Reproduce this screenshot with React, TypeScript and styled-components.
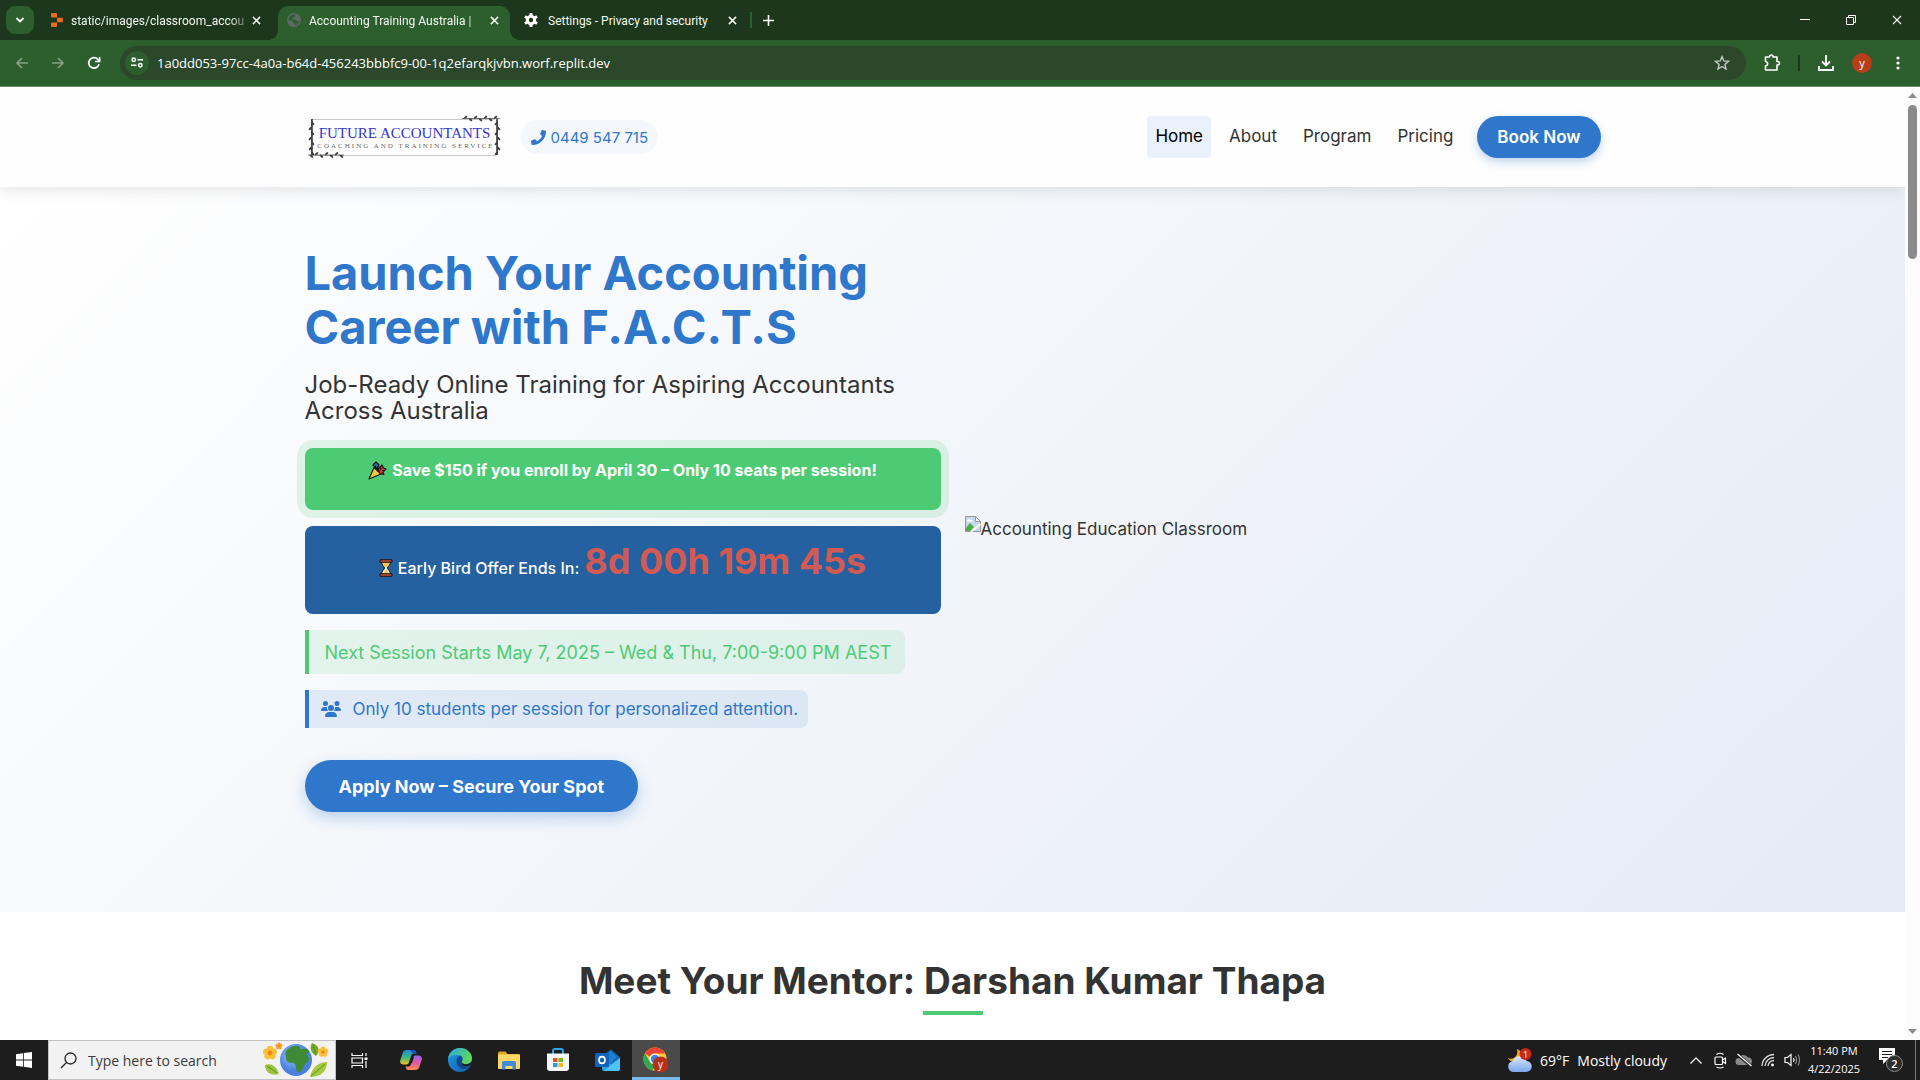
import React from "react";
import styled, { createGlobalStyle, css } from "styled-components";
import { FaPhone } from "react-icons/fa";
import { FaUsers } from "react-icons/fa6";

const brand = "Inter, 'Open Sans', sans-serif";
const system = "'Open Sans', 'Noto Sans', sans-serif";
const blue = "#2e77cb";
const green = "#4dcb74";

const GlobalStyle = createGlobalStyle`
  *, *::before, *::after { box-sizing: border-box; }
  body { margin: 0; background: #fff; }
  button, input { font: inherit; color: inherit; border: 0; padding: 0; margin: 0; background: none; }
  button { cursor: pointer; }
  a { color: inherit; text-decoration: none; }
  h1, h2, p { margin: 0; }
  svg { display: block; flex: none; }
`;

const Screen = styled.div`
  height: 100vh;
  display: grid;
  grid-template-rows: 40px 47px minmax(0, 1fr) 40px;
  overflow: hidden;
  font-family: ${system};
`;

/* ---------- browser tabs ---------- */

const TabStrip = styled.div`
  display: flex;
  align-items: flex-end;
  padding-left: 6px;
  background: #1c371b;
  color: #f2f7f1;
  font-family: Roboto, sans-serif;
  font-size: 12px;
`;

const TabSearch = styled.button`
  width: 28px;
  height: 28px;
  margin: 0 6px 6px 0;
  display: grid;
  place-items: center;
  border-radius: 9px;
  background: #2d5e2d;
`;

const Tab = styled.div<{ $active?: boolean; $wideIcon?: boolean }>`
  width: 238px;
  height: 34px;
  display: flex;
  align-items: center;
  gap: ${(p) => (p.$wideIcon ? 10 : 8)}px;
  padding: ${(p) => (p.$wideIcon ? "0 6px 6px 14px" : "0 12px 6px 11px")};
  position: relative;
  ${(p) =>
    p.$active &&
    css`
      width: 232px;
      padding: 0 6px 6px 9px;
      background: #2d5e2d;
      border-radius: 10px 10px 0 0;
      &::before, &::after {
        content: "";
        position: absolute;
        bottom: 0;
        width: 10px;
        height: 10px;
      }
      &::before {
        left: -10px;
        background: radial-gradient(circle at 0 0, transparent 10px, #2d5e2d 10px);
      }
      &::after {
        right: -10px;
        background: radial-gradient(circle at 100% 0, transparent 10px, #2d5e2d 10px);
      }
    `}
`;

const TabTitle = styled.span<{ $fade?: boolean }>`
  flex: 1;
  min-width: 0;
  padding-top: 2px;
  line-height: 20px;
  white-space: nowrap;
  ${(p) =>
    p.$fade &&
    css`
      margin-right: -8px;
      mask-image: linear-gradient(90deg, #000 90%, rgba(0, 0, 0, 0.3));
    `}
`;

const IconButton = styled.button<{ $size?: number }>`
  width: ${(p) => p.$size ?? 20}px;
  height: ${(p) => p.$size ?? 20}px;
  display: grid;
  place-items: center;
  flex: none;
`;

const TabRule = styled.span`
  width: 2px;
  height: 16px;
  margin: 0 6px 12px 2px;
  background: #2d5e2d;
`;

const NewTab = styled(IconButton)`
  margin-bottom: 10px;
`;

const WindowButtons = styled.div`
  margin-left: auto;
  display: flex;
  height: 40px;
`;

const WindowButton = styled.button`
  width: 46px;
  display: grid;
  place-items: center;
`;

/* ---------- browser toolbar ---------- */

const Toolbar = styled.div`
  display: flex;
  align-items: center;
  padding: 0 8px 1px 8px;
  background: #2d5e2d;
  border-bottom: 1px solid #6b8d6b;
  color: #fff;
`;

const NavButtons = styled.div`
  display: flex;
  gap: 8px;
  width: 112px;
`;

const AddressBar = styled.label`
  flex: 1;
  height: 34px;
  display: flex;
  align-items: center;
  padding: 0 14px 0 5px;
  border-radius: 17px;
  background: #2b482b;
`;

const SiteInfo = styled.span`
  width: 24px;
  height: 24px;
  display: grid;
  place-items: center;
  border-radius: 12px;
  background: #2d5e2d;
`;

const Address = styled.input`
  flex: 1;
  min-width: 0;
  padding-left: 8px;
  outline: 0;
  font-size: 13px;
`;

const ToolbarActions = styled.div`
  display: flex;
  align-items: center;
  padding-left: 12px;
  gap: 12px;
`;

const ToolbarRule = styled.span`
  width: 2px;
  height: 16px;
  background: #1c371b;
`;

const Profile = styled.button`
  width: 20px;
  height: 20px;
  border-radius: 10px;
  background: #b73d1b;
  font-size: 11px;
  line-height: 16px;
`;

/* ---------- page ---------- */

const Viewport = styled.div`
  display: grid;
  grid-template-columns: minmax(0, 1fr) 15px;
  overflow: hidden;
`;

const Page = styled.div`
  overflow: hidden;
  font-family: ${brand};
  font-size: 17px;
  color: #333;
`;

const Container = styled.div`
  max-width: 1320px;
  margin: 0 auto;
  padding: 0 12px;
`;

const SiteHeader = styled.header`
  position: relative;
  background: #fefefe;
  box-shadow: 0 2px 15px rgba(0, 0, 0, 0.12);
`;

const HeaderRow = styled(Container)`
  height: 100px;
  display: flex;
  align-items: center;
`;

const Phone = styled.a`
  display: flex;
  align-items: center;
  gap: 5px;
  height: 34px;
  margin-left: 19px;
  padding: 0 10px;
  border-radius: 17px;
  background: #f4f7fc;
  color: ${blue};
  font-size: 15px;
`;

const SiteNav = styled.nav`
  margin-left: auto;
  display: flex;
  gap: 10px;
`;

const NavLink = styled.a<{ $current?: boolean }>`
  height: 42px;
  padding: 0 8px;
  line-height: 41px;
  border-radius: 4px;
  color: ${(p) => (p.$current ? "#000" : "#333")};
  background: ${(p) => (p.$current ? "#eaf1fb" : "transparent")};
`;

const CallToAction = styled.button<{ $large?: boolean }>`
  height: ${(p) => (p.$large ? 52 : 42)}px;
  padding: 0 ${(p) => (p.$large ? 34 : 20)}px;
  border-radius: 26px;
  background: ${blue};
  color: #fff;
  font-size: ${(p) => (p.$large ? 18 : 17)}px;
  font-weight: ${(p) => (p.$large ? 700 : 600)};
  box-shadow: ${(p) => (p.$large ? "0 6px 15px" : "0 4px 10px")} rgba(46, 119, 203, 0.3);
`;

const NavCta = styled(CallToAction)`
  margin-left: 6px;
`;

const Hero = styled.section`
  padding: 59px 0 100px;
  background: linear-gradient(135deg, #ffffff, #e4ebf5);
`;

const HeroGrid = styled(Container)`
  display: grid;
  grid-template-columns: 1fr 1fr;
  gap: 24px;
  align-items: center;
`;

const HeroCopy = styled.div`
  display: flex;
  flex-direction: column;
  align-items: flex-start;
  gap: 16px;
`;

const Title = styled.h1`
  padding-bottom: 2px;
  font-size: 47px;
  line-height: 54px;
  font-weight: 700;
  color: ${blue};
`;

const Lead = styled.p`
  padding-bottom: 8px;
  font-size: 24px;
  line-height: 26px;
`;

const Banner = styled.div<{ $tone: "green" | "blue" }>`
  align-self: stretch;
  display: flex;
  justify-content: center;
  align-items: baseline;
  gap: 5px;
  border-radius: 8px;
  color: #fff;
  font-size: 16px;
  ${(p) =>
    p.$tone === "green"
      ? css`
          height: 62px;
          padding-top: 9px;
          line-height: 26px;
          background: ${green};
          box-shadow: 0 0 0 8px rgba(77, 203, 116, 0.15);
          font-weight: 700;
        `
      : css`
          height: 88px;
          padding-top: 8px;
          line-height: 54px;
          background: #2560a0;
          font-weight: 500;
        `}
`;

const EmojiSlot = styled.span`
  align-self: flex-start;
  display: grid;
  place-items: center;
  height: 26px;
`;

const TimerEmoji = styled(EmojiSlot)`
  height: 68px;
`;

const Countdown = styled.strong`
  font-size: 36px;
  font-weight: 700;
  color: #d15b54;
`;

const Note = styled.p<{ $tone: "green" | "blue" }>`
  display: flex;
  align-items: center;
  gap: 12px;
  border-left: 4px solid;
  border-radius: 0 8px 8px 0;
  ${(p) =>
    p.$tone === "green"
      ? css`
          height: 44px;
          padding: 0 14px 0 16px;
          font-size: 18px;
          color: ${green};
          background: rgba(77, 203, 116, 0.12);
          border-color: ${green};
        `
      : css`
          height: 38px;
          padding: 0 10px 0 12px;
          font-size: 17px;
          color: ${blue};
          background: rgba(46, 119, 203, 0.11);
          border-color: ${blue};
        `}
`;

const HeroAction = styled.div`
  padding-top: 16px;
`;

const MissingPicture = styled.div`
  display: flex;
  align-items: flex-start;
  line-height: 26px;
`;

const Mentor = styled.section`
  padding-top: 46px;
  background: #fff;
`;

const SectionTitle = styled.h2`
  display: flex;
  flex-direction: column;
  align-items: center;
  gap: 8px;
  font-size: 37px;
  line-height: 45px;
  font-weight: 700;
  &::after {
    content: "";
    width: 60px;
    height: 4px;
    background: ${green};
  }
`;

const ScrollTrack = styled.div`
  display: flex;
  flex-direction: column;
  align-items: center;
  padding: 6px 0;
  background: #fcfcfc;
`;

const ScrollThumb = styled.div`
  width: 9px;
  height: 154px;
  margin: 7px 0 auto;
  border-radius: 5px;
  background: #8b8b8b;
`;

/* ---------- taskbar ---------- */

const Taskbar = styled.footer`
  display: flex;
  align-items: stretch;
  background: #1e1d1d;
  color: #fff;
`;

const TaskButton = styled.button<{ $active?: boolean }>`
  width: 48px;
  display: grid;
  place-items: center;
  ${(p) => p.$active && "background: #4b4a4a; box-shadow: inset 0 -3px #76b9ed;"}
`;

const SearchBox = styled.label`
  width: 288px;
  display: flex;
  align-items: center;
  padding: 0 5px 0 11px;
  gap: 11px;
  background: #f2f2f2;
  border: 1px solid #c3c3c3;
  color: #222;
`;

const SearchInput = styled.input`
  flex: 1;
  min-width: 0;
  outline: 0;
  font-size: 14px;
  &::placeholder { color: #3a3a3a; opacity: 1; }
`;

const PinnedApps = styled.div`
  display: flex;
  gap: 1px;
`;

const TaskViewButton = styled(TaskButton)`
  margin-right: 2px;
`;

const Tray = styled.div`
  margin-left: auto;
  display: flex;
  align-items: center;
`;

const Weather = styled.button`
  display: flex;
  align-items: center;
  gap: 8px;
  margin-right: 19px;
  font-size: 14px;
`;

const TrayIcons = styled.div`
  display: flex;
  align-items: center;
  gap: 4px;
`;

const Clock = styled.div`
  width: 64px;
  text-align: center;
  font-size: 11px;
  line-height: 18px;
`;

const Notifications = styled.button`
  width: 49px;
  padding-left: 12px;
`;

const ShowDesktop = styled.button`
  width: 5px;
  align-self: stretch;
  border-left: 1px solid #7a7a7a;
`;

/* ---------- drawings ---------- */

const CloseX = ({ size = 10 }: { size?: number }) => (
  <svg width={size} height={size} viewBox="0 0 10 10" fill="none" stroke="currentColor" strokeWidth={size > 9 ? 1.1 : 1.7}>
    <path d="M1 1l8 8M9 1l-8 8" />
  </svg>
);

const Arrow = ({ flip }: { flip?: boolean }) => (
  <svg width="14" height="14" viewBox="0 0 14 14" fill="none" stroke="#84a184" strokeWidth="1.7">
    <path d={flip ? "M1 7h11M7 2l5 5-5 5" : "M13 7H2M7 2L2 7l5 5"} />
  </svg>
);

const ReplitMark = () => (
  <svg width="12" height="14" viewBox="0 0 12 14" fill="#ea6a20">
    <path d="M1 0h4q1 0 1 1v3.6H1Q0 4.600 0 3.600V1Q0 0 1 0zM6 4.700h5q1 0 1 1v2.600q0 1-1 1H6zM0 10.400q0-1 1-1h5V13q0 1-1 1H1q-1 0-1-1z" />
  </svg>
);

const GlobeMark = () => (
  <svg width="14" height="14" viewBox="0 0 14 14">
    <circle cx="7" cy="7" r="7" fill="#5f6a68" />
    <path d="M8 1.500C9 3 7 3.500 7 4.500S5 5 5 6.500h3c2 0 1 2 3 2 .8 0 1.400-.6 1.800-1.500C12.500 10 10 12.500 7.500 12.500c.5-2-1.500-2-1.500-3.500S3 8 1.300 7C1.500 4 4 1.400 8 1.500z" fill="#2d5e2d" />
  </svg>
);

const Gear = () => (
  <svg width="14" height="14" viewBox="0 0 14 14">
    <circle cx="7" cy="7" r="3.700" fill="none" stroke="#fff" strokeWidth="3" />
    <g stroke="#fff" strokeWidth="3">
      <path d="M7 0v2.500M7 11.500V14M.94 3.500l2.160 1.250M10.900 9.250l2.160 1.250M.94 10.500l2.160-1.250M10.900 4.750l2.160-1.250" />
    </g>
  </svg>
);

const Vine = ({ length, seed = 0 }: { length: number; seed?: number }) => {
  const count = Math.floor(length / 5);
  let d = `M0 0H${length}`;
  for (let i = 0; i < count; i++) {
    const x = i * 5 + 2;
    const side = (i + seed) % 2 ? 1 : -1;
    d += `M${x} 0q1 ${side * 3} 3 ${side * 2.4}q0 ${-side * 2} -3 ${-side * 2.4}`;
  }
  return <path d={d} fill="#3a3a3a" stroke="#3a3a3a" strokeWidth="0.700" />;
};

const Logo = () => (
  <svg width="197" height="50" viewBox="0 3 197 50" role="img" aria-label="Future Accountants Coaching and Training Service">
    <path d="M6 10.500H190M6 46.500H190" stroke="#c9c9c9" />
    <path d="M7 10v36M192 10v36" stroke="#222" strokeWidth="1.400" />
    <g transform="translate(157 9.500)"><Vine length={38} /></g>
    <g transform="translate(3 46)"><Vine length={36} seed={1} /></g>
    <g transform="translate(6.500 11) rotate(90)"><Vine length={35} /></g>
    <g transform="translate(192.500 11) rotate(90)"><Vine length={35} seed={1} /></g>
    <text x="99.500" y="29" textAnchor="middle" fontFamily="'Liberation Serif', serif" fontSize="15" fill="#3434cf">
      FUTURE ACCOUNTANTS
    </text>
    <text x="101" y="39" textAnchor="middle" fontFamily="'Liberation Serif', serif" fontSize="7" letterSpacing="2" fill="#666">
      COACHING AND TRAINING SERVICE
    </text>
  </svg>
);

const Popper = () => (
  <svg width="19" height="19" viewBox="0 0 19 19" stroke="#111" strokeWidth="1.100" strokeLinejoin="round">
    <path d="M1 18L6 6.500l7 6.500z" fill="#fbc53d" />
    <path d="M5 4l3-3 3 3-2 4z" fill="#2a6fb5" />
    <path d="M10 8l4-4 1.500 3 2.500 1-3 3.500 1 2-4-1z" fill="#d33b2c" />
    <path d="M7 5l3 4M12 6l1 3M14 9.500h3" fill="none" />
  </svg>
);

const Hourglass = () => (
  <svg width="14" height="18" viewBox="0 0 14 18" stroke="#111" strokeWidth="1">
    <path d="M2.500 3h9c0 3-3 4.500-3 6s3 3 3 6h-9c0-3 3-4.500 3-6s-3-3-3-6z" fill="#f5f5f5" />
    <path d="M3.500 3.500h7C10 6 8 7 7.500 8.500h-1C6 7 4 6 3.500 3.500zM7 9.500l2.500 5h-5z" fill="#fbc53d" stroke="none" />
    <path d="M1 .8h12v2.400H1zM1 14.800h12v2.400H1z" fill="#e0523c" />
  </svg>
);

const BrokenImage = () => (
  <svg width="16" height="16" viewBox="0 0 16 16">
    <path d="M.5.500h10l5 5v10H.5z" fill="#c6d7f3" stroke="#979797" />
    <path d="M10.500.500v5h5z" fill="#fff" stroke="#979797" />
    <path d="M1 15v-3l4-5 4 4-3 4z" fill="#4fae3f" />
    <path d="M3 4q1.500-2 3 0h1.500v1.500H2V4z" fill="#fff" />
    <path d="M6 15.500L15.500 8" stroke="#fff" strokeWidth="2.200" />
  </svg>
);

const Triangle = ({ down }: { down?: boolean }) => (
  <svg width="9" height="5" viewBox="0 0 9 5" fill="#8b8b8b">
    <path d={down ? "M0 0h9L4.500 5z" : "M0 5h9L4.500 0z"} />
  </svg>
);

const Flower = ({ x, y, r, fill }: { x: number; y: number; r: number; fill: string }) => (
  <g transform={`translate(${x} ${y})`}>
    {[0, 72, 144, 216, 288].map((a) => (
      <circle key={a} cx="0" cy={-r} r={r * 0.8} fill={fill} transform={`rotate(${a})`} />
    ))}
    <circle r={r * 0.6} fill="#ee8a12" />
  </g>
);

const EarthArt = () => (
  <svg width="68" height="36" viewBox="0 0 68 36">
    <defs>
      <radialGradient id="sea" cx="40%" cy="35%"><stop offset="0" stopColor="#8fc2ff" /><stop offset="1" stopColor="#4b7fe0" /></radialGradient>
    </defs>
    <path d="M3 23c5-2 11 0 14 9-7 2-14-1-14-9z" fill="#9cc33b" />
    <path d="M50 1c7 2 9 8 4 13-5-3-7-8-4-13z" fill="#76a82c" />
    <path d="M65 20c-8 0-15 5-17 15 10 0 17-5 17-15z" fill="#a4c93f" />
    <path d="M5 24l10 7M51 3l3 10M63 22L49 34" stroke="#5b8f22" fill="none" />
    <circle cx="34" cy="18" r="16" fill="url(#sea)" />
    <path d="M23 12c2-7 9-9 14-8 2 1 0 3 3 3s5-1 7 2c1 2-3 2-2 4s3 3 2 5-4 3-5 6-3 7-6 6-1-6-3-8-6 0-8-3 0-3-2-7z" fill="#3f8a35" />
    <Flower x={8} y={11} r={4} fill="#fbbf38" />
    <Flower x={17} y={4} r={2} fill="#f6a02d" />
    <Flower x={61} y={10} r={3} fill="#fbbf38" />
  </svg>
);

const Windows = () => (
  <svg width="16" height="16" viewBox="0 0 16 16" fill="#fff">
    <path d="M0 2.200L7 1.200v6.300H0zM7.800 1.100L16 0v7.500H7.800zM0 8.400h7v6.300l-7-1zM7.800 8.400H16V16l-8.200-1.200z" />
  </svg>
);

const TaskView = () => (
  <svg width="18" height="17" viewBox="0 0 18 17" fill="none" stroke="#fff" strokeWidth="1.200">
    <path d="M1 1v2.500h10.500V1M1 16v-2.500h10.500V16M1 6h10.500v5H1zM15 1v3M15 9v7" />
    <path d="M13.500 5.500h3v2.500h-3z" fill="#fff" stroke="none" />
  </svg>
);

const Copilot = () => (
  <svg width="22" height="22" viewBox="0 0 24 24">
    <defs>
      <linearGradient id="cpA" x2="0" y2="1"><stop stopColor="#1f8be0" /><stop offset=".5" stopColor="#3cb77c" /><stop offset="1" stopColor="#f2c21c" /></linearGradient>
      <linearGradient id="cpB" x2="0" y2="1"><stop stopColor="#9a62f2" /><stop offset=".5" stopColor="#e35aa4" /><stop offset="1" stopColor="#fb8c4b" /></linearGradient>
    </defs>
    <path d="M8 1h7c2 0 2.500 2 3 4h-3c-2 0-2.500 1-3 3l-2 6c-.6 2-1.500 3-3 3H4c-3 0-4.500-2-3.600-5L3 4c.8-2 2-3 5-3z" fill="url(#cpA)" />
    <path d="M11 1h4c2 0 2.500 2 3 4h-4z" fill="#1c50b8" />
    <path d="M16 23H9c-2 0-2.500-2-3-4h3c2 0 2.500-1 3-3l2-6c.6-2 1.500-3 3-3h3c3 0 4.500 2 3.600 5L21 20c-.8 2-2 3-5 3z" fill="url(#cpB)" />
    <path d="M11 15.500l2.300-7h2l-2.300 7z" fill="#1e1d1d" />
  </svg>
);

const Edge = () => (
  <svg width="24" height="24" viewBox="0 0 24 24">
    <defs>
      <linearGradient id="edA" x2="1" y2=".4"><stop stopColor="#2aa7e8" /><stop offset="1" stopColor="#5fd65b" /></linearGradient>
      <linearGradient id="edB" x2="1" y2="1"><stop stopColor="#1f9be6" /><stop offset="1" stopColor="#125ba8" /></linearGradient>
    </defs>
    <circle cx="12" cy="12" r="12" fill="url(#edB)" />
    <path d="M0 11C1 4 6 0 12 0c7 0 12 5 12 10 0 4-3 6-6.500 6-2.500 0-4-1-4-2 0-.7 1-1 1-3 0-2-2.500-4-6-4C5 7 1.500 8.500 0 11z" fill="url(#edA)" />
    <path d="M12 7.600C9.500 9 8.500 11 8.500 13.500c0 4 3.500 7.500 8 7.500 2 0 4.500-1 6-3-3 1.500-9 .500-9-4 0-.7 1-1 1-3 0-1.500-1-2.800-2.500-3.400z" fill="#10498c" />
    <path d="M24 16c-1.500 1.500-3.500 2.300-6 2.300-3 0-4.500-1.500-4.500-4.300 1 2 3 2.500 5 2.300 2.500-.2 4.500-1.300 5.500-3z" fill="#1e1d1d" />
  </svg>
);

const Explorer = () => (
  <svg width="22" height="19" viewBox="0 0 22 19">
    <path d="M0 2q0-1.500 1.500-1.500h6L9.500 3H20q2 0 2 1.500V8H0z" fill="#e0a52b" />
    <path d="M0 3.500h22V17q0 1-1 1H1q-1 0-1-1z" fill="#ffd766" />
    <path d="M4 18.500v-7Q4 10 5.500 10h11q1.500 0 1.500 1.500v7h-3.500V15h-7v3.500z" fill="#3f8edb" />
  </svg>
);

const Store = () => (
  <svg width="24" height="24" viewBox="0 0 24 24">
    <path d="M7 6V3q0-2 2-2h6q2 0 2 2v3" fill="none" stroke="#29a9ea" strokeWidth="2" />
    <path d="M1 5.500h22V20q0 3-3 3H4q-3 0-3-3z" fill="#f4f6f8" />
    <path d="M7 10h4.500v4H7z" fill="#e8532d" /><path d="M12.500 10H17v4h-4.500z" fill="#78b81e" />
    <path d="M7 15h4.500v4H7z" fill="#1f9fe6" /><path d="M12.500 15H17v4h-4.500z" fill="#f7b718" />
  </svg>
);

const Outlook = () => (
  <svg width="25" height="24" viewBox="0 0 25 24">
    <path d="M7 8l9-6.500L25 9v3l-9 4-9-4z" fill="#1466b8" />
    <path d="M9 8l7-5 6 6-8 8-5-3z" fill="#1c7fd0" />
    <path d="M7 12l9 4 9-6v11q0 2-2 2H9q-2 0-2-2z" fill="#27a5e8" />
    <path d="M25 10v11q0 2-2 2H9z" fill="#4fc4f4" />
    <rect y="5" width="14" height="14" rx="1.500" fill="#0f63bd" />
    <ellipse cx="7" cy="12" rx="3" ry="3.400" fill="none" stroke="#fff" strokeWidth="1.700" />
  </svg>
);

const Chrome = () => (
  <svg width="26" height="26" viewBox="0 0 26 26">
    <circle cx="12" cy="12" r="11.500" fill="#fcc934" />
    <path d="M2 6.200A11.500 11.500 0 0 1 22 6.500H12a5.500 5.500 0 0 0-5 3.200z" fill="#e94335" />
    <path d="M2 6.200L7 15a5.500 5.500 0 0 0 5 2.500l-2.500 5.800A11.500 11.500 0 0 1 2 6.200z" fill="#33a853" />
    <circle cx="12" cy="12" r="5.500" fill="#fff" />
    <circle cx="12" cy="12" r="4.200" fill="#3f7fe8" />
    <circle cx="17.500" cy="17.500" r="8" fill="#b5301a" />
    <text x="17.500" y="20.500" textAnchor="middle" fontFamily={system} fontSize="10" fill="#fff">y</text>
  </svg>
);

const WeatherArt = () => (
  <svg width="25" height="25" viewBox="0 0 25 25">
    <defs><linearGradient id="cl" x2="0" y2="1"><stop stopColor="#d9e8fd" /><stop offset="1" stopColor="#7ba6ee" /></linearGradient></defs>
    <path d="M10 1c1 4 0 7-3 9-2 1-4 1-6 0 2 4 6 5 10 4l5-5c-1-4-3-7-6-8z" fill="#f5a623" />
    <path d="M6 24a5.500 5.500 0 0 1-.5-10.800A7.500 7.500 0 0 1 19.500 13 5.500 5.500 0 0 1 19 24z" fill="url(#cl)" />
    <circle cx="18.500" cy="6" r="6" fill="#c92a1c" />
    <text x="18.500" y="9.500" textAnchor="middle" fontFamily={system} fontSize="9" fill="#fff">1</text>
  </svg>
);

const NoticeArt = () => (
  <svg width="26" height="26" viewBox="0 0 26 26">
    <path d="M1 1h16v12H9l-4 4v-4H1z" fill="#fff" />
    <path d="M4 4.500h10M4 7.500h10M4 10.500h6" stroke="#1e1d1d" strokeWidth="1.200" />
    <circle cx="16.500" cy="16.500" r="8" fill="#2e2d2d" stroke="#8d8d8d" />
    <text x="16.500" y="20.500" textAnchor="middle" fontFamily={system} fontSize="11" fontWeight="600" fill="#fff">2</text>
  </svg>
);

/* ---------- screen ---------- */

export default function App() {
  return (
    <Screen>
      <GlobalStyle />
      <TabStrip>
        <TabSearch aria-label="Search tabs">
          <svg width="10" height="8" viewBox="0 0 10 8" fill="none" stroke="#fff" strokeWidth="1.800"><path d="M1.500 2L5 5.500 8.500 2" /></svg>
        </TabSearch>
        <Tab>
          <ReplitMark />
          <TabTitle $fade>static/images/classroom_accou</TabTitle>
          <IconButton aria-label="Close tab"><CloseX size={9} /></IconButton>
        </Tab>
        <Tab $active>
          <GlobeMark />
          <TabTitle $fade>Accounting Training Australia |</TabTitle>
          <IconButton aria-label="Close tab"><CloseX size={9} /></IconButton>
        </Tab>
        <Tab $wideIcon>
          <Gear />
          <TabTitle>Settings - Privacy and security</TabTitle>
          <IconButton aria-label="Close tab"><CloseX size={9} /></IconButton>
        </Tab>
        <TabRule />
        <NewTab aria-label="New tab">
          <svg width="11" height="11" viewBox="0 0 11 11" stroke="#fff" strokeWidth="1.600"><path d="M5.500 0v11M0 5.500h11" /></svg>
        </NewTab>
        <WindowButtons>
          <WindowButton aria-label="Minimize"><svg width="10" height="2" viewBox="0 0 10 2"><path d="M0 0h10v1H0z" fill="#fff" /></svg></WindowButton>
          <WindowButton aria-label="Restore"><svg width="10" height="10" viewBox="0 0 10 10" fill="none" stroke="#fff"><path d="M.5 2.500h7v7h-7zM2.500 2.500v-2h7v7h-2" /></svg></WindowButton>
          <WindowButton aria-label="Close"><CloseX /></WindowButton>
        </WindowButtons>
      </TabStrip>

      <Toolbar>
        <NavButtons>
          <IconButton $size={28} aria-label="Back"><Arrow /></IconButton>
          <IconButton $size={28} aria-label="Forward"><Arrow flip /></IconButton>
          <IconButton $size={28} aria-label="Reload">
            <svg width="14" height="14" viewBox="0 0 14 14" fill="none" stroke="#fff" strokeWidth="1.700"><path d="M12 8.200A5.200 5.200 0 1 1 10.800 3.400L12.400 5" /><path d="M12.600 1v4.500H8.100" /></svg>
          </IconButton>
        </NavButtons>
        <AddressBar>
          <SiteInfo>
            <svg width="12" height="11" viewBox="0 0 12 11" fill="none" stroke="#fff" strokeWidth="1.500"><circle cx="2.700" cy="2.700" r="1.700" /><path d="M6.500 2.700H12M0 8.300h5.500" /><circle cx="9.300" cy="8.300" r="1.700" /></svg>
          </SiteInfo>
          <Address aria-label="Address" defaultValue="1a0dd053-97cc-4a0a-b64d-456243bbbfc9-00-1q2efarqkjvbn.worf.replit.dev" />
          <IconButton aria-label="Bookmark">
            <svg width="16" height="16" viewBox="0 0 16 16" fill="none" stroke="#c3cbc3" strokeWidth="1.400"><path d="M8 1.600l1.800 4.300 4.700.4-3.600 3.100 1.100 4.600L8 11.500 4 14l1.100-4.600L1.500 6.300l4.700-.4z" /></svg>
          </IconButton>
        </AddressBar>
        <ToolbarActions>
          <IconButton $size={28} aria-label="Extensions">
            <svg width="17" height="17" viewBox="0 0 17 17" fill="none" stroke="#fff" strokeWidth="1.600" strokeLinejoin="round"><path d="M1.500 3h4q0-2 1.800-2T9 3h4v4.500q2.500 0 2.500 1.700T13 11v5H1.500v-4q2.200-.5 2.200-2.300T1.500 7.500z" /></svg>
          </IconButton>
          <ToolbarRule />
          <IconButton $size={28} aria-label="Downloads">
            <svg width="16" height="16" viewBox="0 0 16 16" fill="none" stroke="#fff" strokeWidth="1.800"><path d="M8 0v10M4 6.500l4 4 4-4M1 11v4h14v-4" /></svg>
          </IconButton>
          <Profile aria-label="Profile">y</Profile>
          <IconButton $size={28} aria-label="Menu">
            <svg width="4" height="14" viewBox="0 0 4 14" fill="#fff"><circle cx="2" cy="2" r="1.600" /><circle cx="2" cy="7" r="1.600" /><circle cx="2" cy="12" r="1.600" /></svg>
          </IconButton>
        </ToolbarActions>
      </Toolbar>

      <Viewport>
        <Page>
          <SiteHeader>
            <HeaderRow>
              <a href="#home"><Logo /></a>
              <Phone href="tel:0449547715"><FaPhone size={15} />0449 547 715</Phone>
              <SiteNav>
                <NavLink $current href="#home">Home</NavLink>
                <NavLink href="#about">About</NavLink>
                <NavLink href="#program">Program</NavLink>
                <NavLink href="#pricing">Pricing</NavLink>
                <NavCta>Book Now</NavCta>
              </SiteNav>
            </HeaderRow>
          </SiteHeader>
          <Hero>
            <HeroGrid>
              <HeroCopy>
                <Title>Launch Your Accounting Career with F.A.C.T.S</Title>
                <Lead>Job-Ready Online Training for Aspiring Accountants Across Australia</Lead>
                <Banner $tone="green">
                  <EmojiSlot><Popper /></EmojiSlot>
                  <span>Save $150 if you enroll by April 30 – Only 10 seats per session!</span>
                </Banner>
                <Banner $tone="blue">
                  <TimerEmoji><Hourglass /></TimerEmoji>
                  <span>Early Bird Offer Ends In:</span>
                  <Countdown>8d 00h 19m 45s</Countdown>
                </Banner>
                <Note $tone="green">Next Session Starts May 7, 2025 – Wed &amp; Thu, 7:00-9:00 PM AEST</Note>
                <Note $tone="blue"><FaUsers size={20} />Only 10 students per session for personalized attention.</Note>
                <HeroAction><CallToAction $large>Apply Now – Secure Your Spot</CallToAction></HeroAction>
              </HeroCopy>
              <MissingPicture><BrokenImage />Accounting Education Classroom</MissingPicture>
            </HeroGrid>
          </Hero>
          <Mentor>
            <SectionTitle>Meet Your Mentor: Darshan Kumar Thapa</SectionTitle>
          </Mentor>
        </Page>
        <ScrollTrack>
          <Triangle />
          <ScrollThumb />
          <Triangle down />
        </ScrollTrack>
      </Viewport>

      <Taskbar>
        <TaskButton aria-label="Start"><Windows /></TaskButton>
        <SearchBox>
          <svg width="17" height="17" viewBox="0 0 17 17" fill="none" stroke="#222" strokeWidth="1.300"><circle cx="10.500" cy="6.500" r="5.500" /><path d="M6.500 10.500L1 16" /></svg>
          <SearchInput type="search" aria-label="Search" placeholder="Type here to search" />
          <EarthArt />
        </SearchBox>
        <PinnedApps>
          <TaskViewButton aria-label="Task view"><TaskView /></TaskViewButton>
          <TaskButton aria-label="Copilot"><Copilot /></TaskButton>
          <TaskButton aria-label="Edge"><Edge /></TaskButton>
          <TaskButton aria-label="File Explorer"><Explorer /></TaskButton>
          <TaskButton aria-label="Store"><Store /></TaskButton>
          <TaskButton aria-label="Outlook"><Outlook /></TaskButton>
          <TaskButton $active aria-label="Chrome"><Chrome /></TaskButton>
        </PinnedApps>
        <Tray>
          <Weather><WeatherArt /><span>69°F</span><span>Mostly cloudy</span></Weather>
          <TrayIcons>
            <IconButton aria-label="Hidden icons"><svg width="12" height="7" viewBox="0 0 12 7" fill="none" stroke="#fff" strokeWidth="1.300"><path d="M.5 6.500L6 1l5.500 5.500" /></svg></IconButton>
            <IconButton aria-label="Camera"><svg width="13" height="17" viewBox="0 0 13 17" fill="none" stroke="#fff" strokeWidth="1.200"><rect x="1" y="5" width="7.500" height="7.500" rx="1" /><path d="M8.500 8l3-2v5.500l-3-2M2.500 2.500q3.500-2.500 7 0M2.500 15q3.500 2 7 0" /></svg></IconButton>
            <IconButton aria-label="OneDrive"><svg width="18" height="14" viewBox="0 0 18 14"><path d="M4 12a3.500 3.500 0 0 1 0-7 5 5 0 0 1 9-.5A3.800 3.800 0 0 1 14 12z" fill="#8a8a8a" /><path d="M2 1l14 12" stroke="#1e1d1d" strokeWidth="3" /><path d="M2.500 1l14 12" stroke="#fff" strokeWidth="1.200" /></svg></IconButton>
            <IconButton aria-label="Network"><svg width="14" height="14" viewBox="0 0 14 14" fill="none" stroke="#ddd" strokeWidth="1.300"><path d="M1 13A12 12 0 0 1 13 1.500M4 13a9 9 0 0 1 9-8.500M7 13a6 6 0 0 1 6-5.500" /><circle cx="11.500" cy="12" r="1.400" fill="#fff" stroke="none" /></svg></IconButton>
            <IconButton aria-label="Volume"><svg width="17" height="14" viewBox="0 0 17 14" fill="none" stroke="#fff" strokeWidth="1.200"><path d="M1 4.500h2.500L7 1.500v11L3.500 9.500H1zM9.500 5q1 2 0 4" /><path d="M11.500 3q2 4 0 8M14 1.500q3 5.500 0 11" stroke="#8b8b8b" /></svg></IconButton>
          </TrayIcons>
          <Clock>11:40 PM<br />4/22/2025</Clock>
          <Notifications aria-label="Notifications"><NoticeArt /></Notifications>
          <ShowDesktop aria-label="Show desktop" />
        </Tray>
      </Taskbar>
    </Screen>
  );
}
